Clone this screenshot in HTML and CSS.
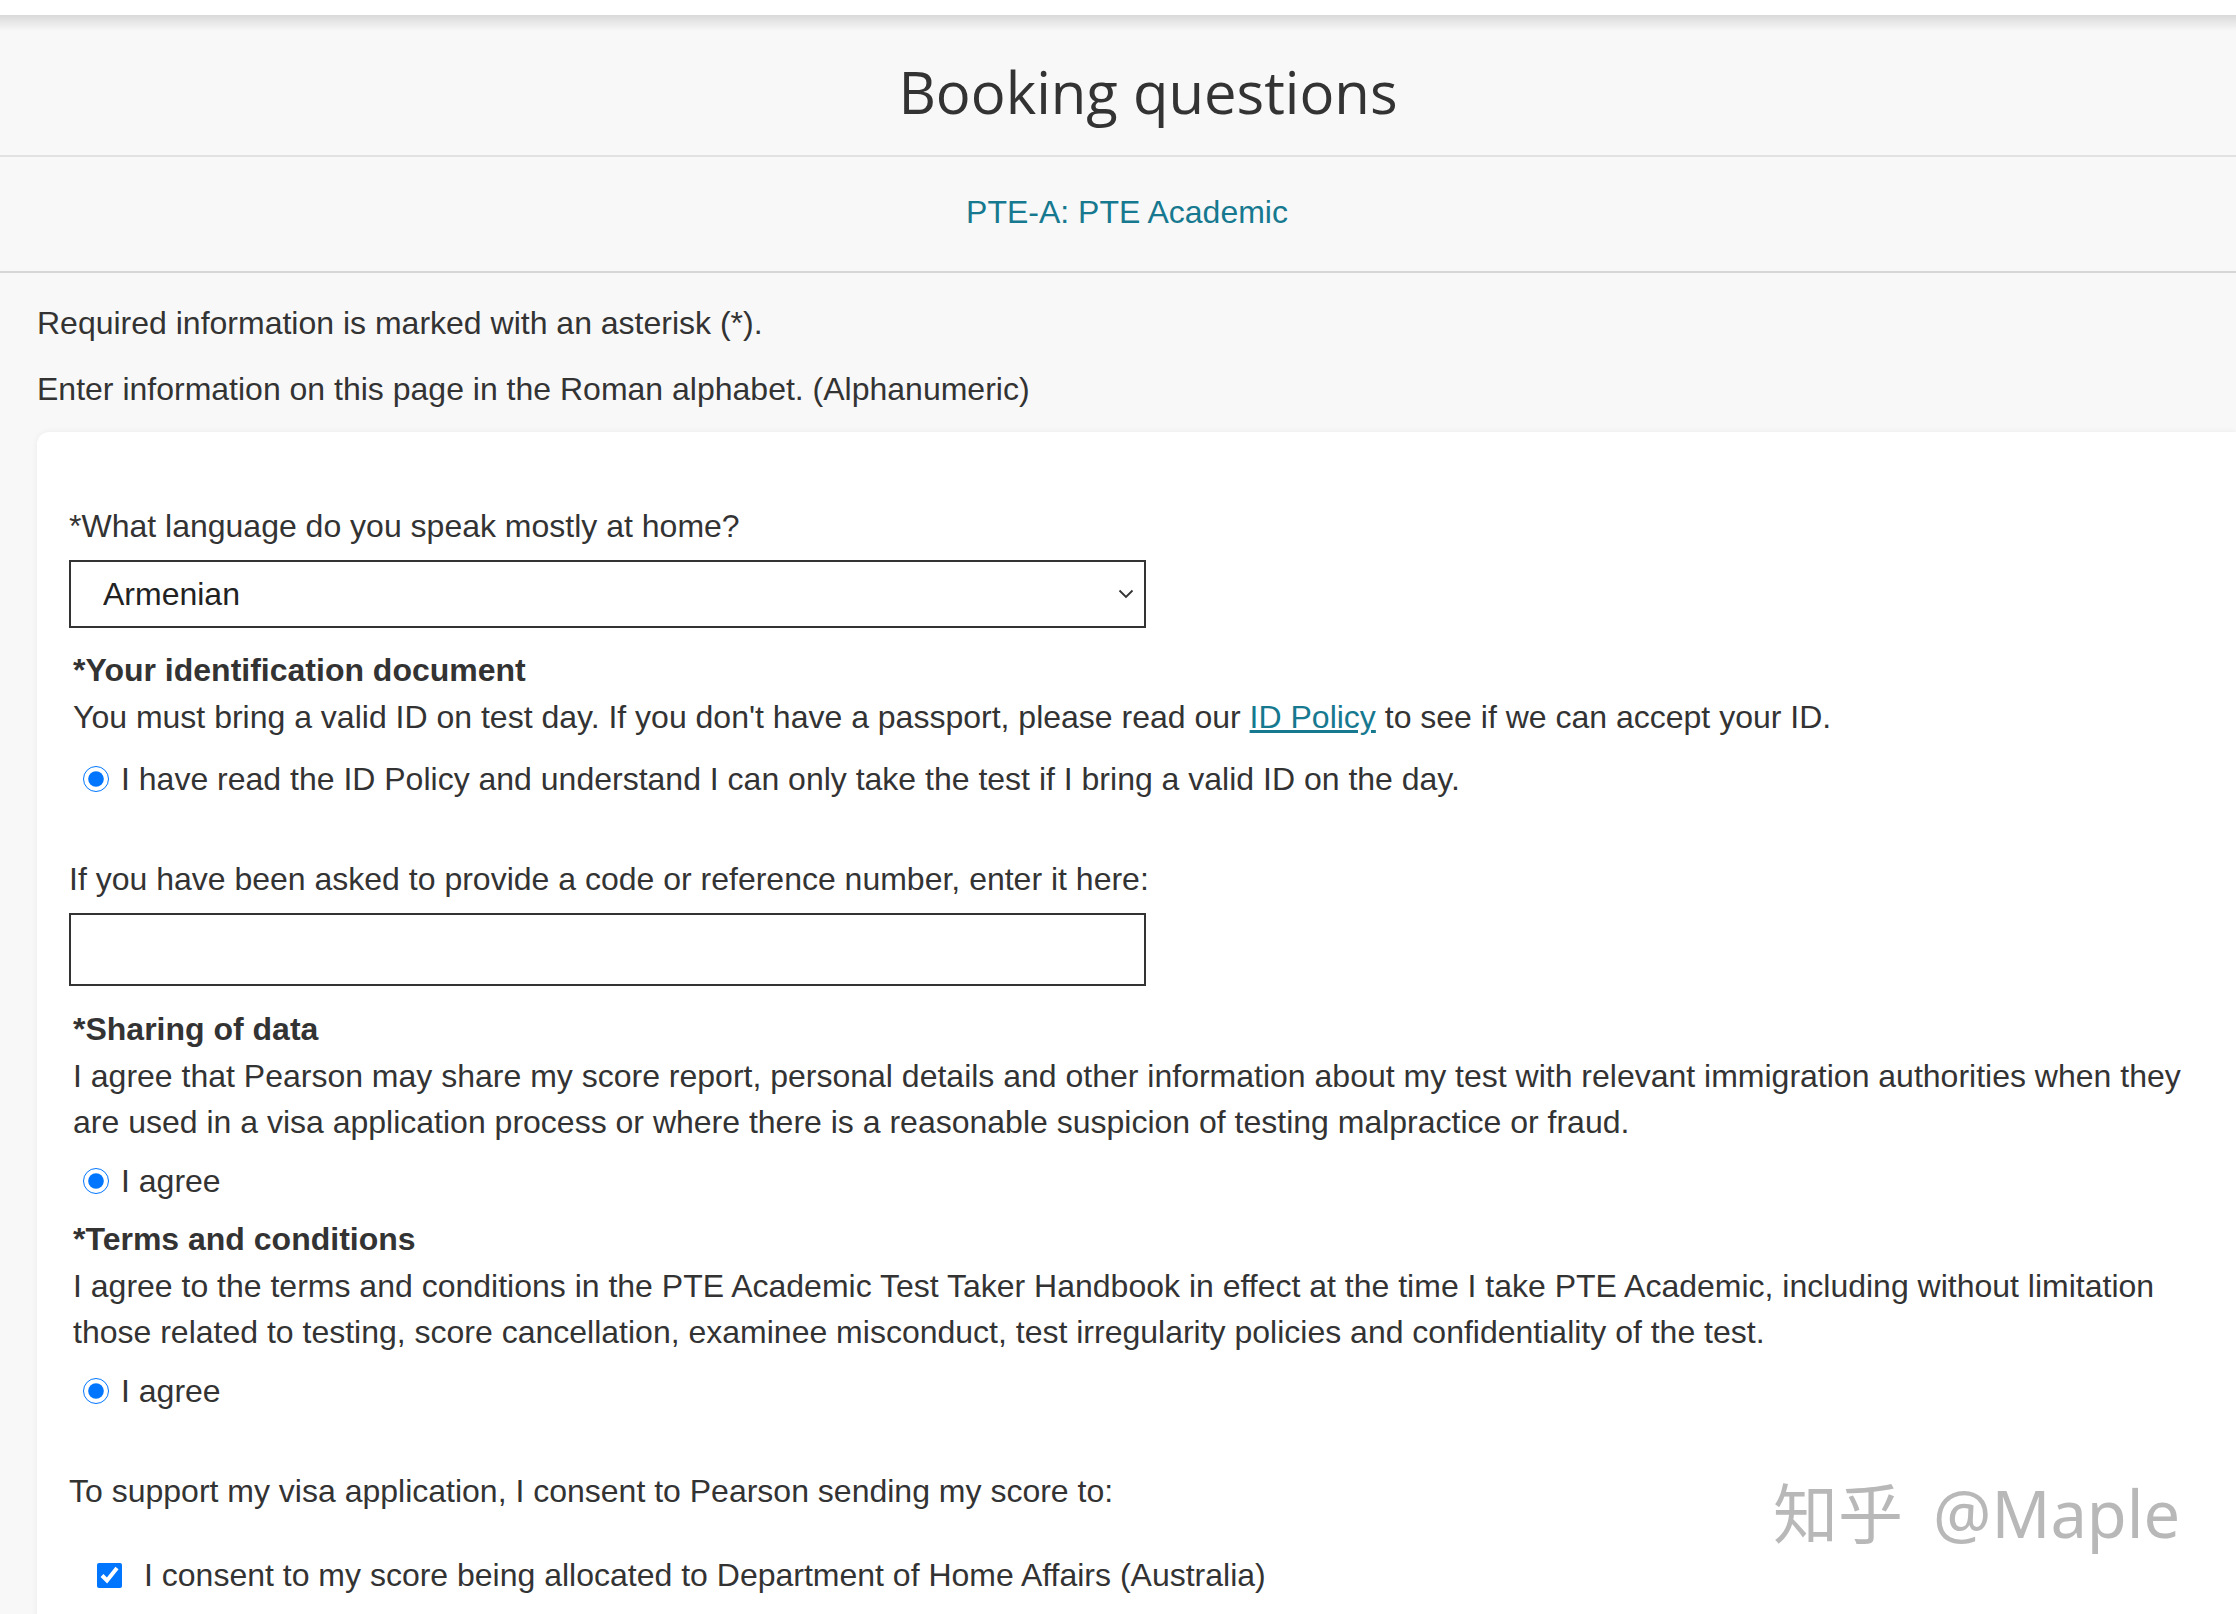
FILE: index.html
```
<!DOCTYPE html>
<html lang="en">
<head>
  <meta charset="UTF-8" />
  <meta name="viewport" content="width=device-width, initial-scale=1.0"/>
  <title>Booking questions</title>
  <link rel="stylesheet" href="styles.css">
</head>
<body>
<div class="top-strip"></div>
<div class="top-shade"></div>
<header class="page-head">
  <div class="title-bar">
    <h1>Booking questions</h1>
  </div>
  <div class="exam-bar">
    <a class="exam-name" href="#">PTE-A: PTE Academic</a>
  </div>
</header>

<main class="page">
  <p class="note">Required information is marked with an asterisk (*).</p>
  <p class="note">Enter information on this page in the Roman alphabet. (Alphanumeric)</p>

  <form class="card">
    <div class="field">
      <label for="language">*What language do you speak mostly at home?</label>
      <div class="select-wrap">
        <select id="language">
          <option>Armenian</option>
        </select>
        <svg class="chevron" width="16" height="10" viewBox="0 0 16 10"><path d="M1.5 1.5 L8 8 L14.5 1.5" fill="none" stroke="#333" stroke-width="1.8"/></svg>
      </div>
    </div>

    <div class="block block-id">
      <h3>*Your identification document</h3>
      <p>You must bring a valid ID on test day. If you don't have a passport, please read our <a href="#">ID Policy</a> to see if we can accept your ID.</p>
      <label class="choice choice-id"><input type="radio" name="id" checked>I have read the ID Policy and understand I can only take the test if I bring a valid ID on the day.</label>
    </div>

    <div class="field field-gap">
      <label for="code">If you have been asked to provide a code or reference number, enter it here:</label>
      <input type="text" id="code" class="text-input">
    </div>

    <div class="block block-share">
      <h3>*Sharing of data</h3>
      <p>I agree that Pearson may share my score report, personal details and other information about my test with relevant immigration authorities when they are used in a visa application process or where there is a reasonable suspicion of testing malpractice or fraud.</p>
      <label class="choice"><input type="radio" name="share" checked>I agree</label>
    </div>

    <div class="block block-terms">
      <h3>*Terms and conditions</h3>
      <p>I agree to the terms and conditions in the PTE Academic Test Taker Handbook in effect at the time I take PTE Academic, including without limitation those related to testing, score cancellation, examinee misconduct, test irregularity policies and confidentiality of the test.</p>
      <label class="choice"><input type="radio" name="terms" checked>I agree</label>
    </div>

    <div class="field field-gap">
      <p class="plain">To support my visa application, I consent to Pearson sending my score to:</p>
      <label class="consent"><input type="checkbox" checked>I consent to my score being allocated to Department of Home Affairs (Australia)</label>
    </div>
  </form>
</main>

<div class="watermark"><span>知乎</span><span class="handle">@Maple</span></div>
</body>
</html>
```

FILE: styles.css
```
html, body {
  margin: 0;
  overflow-x: hidden;
}
body {
  font-family: "Liberation Sans", Arial, sans-serif;
  font-size: 32px;
  line-height: 46px;
  color: #333;
  background-color: #f8f8f8;
}
.top-strip {
  height: 15px;
  background-color: #fff;
}
.top-shade {
  height: 16px;
  background: linear-gradient(#d9d9d9, #f8f8f8);
}
.title-bar {
  padding: 21px 0 23px 60px;
  text-align: center;
  border-bottom: 2px solid #e2e2e2;
}
h1 {
  margin: 0;
  font-family: "Open Sans", "Noto Sans", sans-serif;
  font-weight: 400;
  font-size: 58px;
  line-height: 80px;
  color: #333;
}
.exam-bar {
  padding: 32px 0 36px 18px;
  text-align: center;
  border-bottom: 2px solid #d6d6d6;
}
.exam-name {
  color: #16798f;
  text-decoration: none;
}
.page {
  padding: 27px 0 0 37px;
}
.note {
  margin: 0 0 20px;
}
.card {
  margin-top: 1px;
  background-color: #fff;
  border-radius: 12px 0 0 12px;
  box-shadow: 0 0 6px rgba(0,0,0,0.06);
  padding: 71px 32px 120px 32px;
}
.field label,
.plain {
  display: block;
  margin: 0;
}
.field-gap {
  margin-top: 54px;
}
.select-wrap {
  position: relative;
  width: 1077px;
  margin-top: 11px;
}
select {
  -webkit-appearance: none;
  appearance: none;
  display: block;
  width: 100%;
  height: 68px;
  padding: 0 32px;
  border: 2px solid #333;
  border-radius: 0;
  background-color: #fff;
  font-family: inherit;
  font-size: 32px;
  color: #222;
}
.chevron {
  position: absolute;
  right: 12px;
  top: 29px;
}
.text-input {
  display: block;
  box-sizing: border-box;
  width: 1077px;
  height: 73px;
  margin-top: 11px;
  padding: 0 32px;
  border: 2px solid #333;
  border-radius: 0;
  background-color: #fff;
  font-size: 32px;
}
.block {
  padding-left: 4px;
}
.block-id {
  margin-top: 19px;
}
.block-share {
  margin-top: 20px;
}
.block-terms {
  margin-top: 12px;
}
h3 {
  margin: 0;
  font-size: 32px;
  font-weight: bold;
  line-height: 46px;
}
.block p {
  margin: 1px 0 0;
}
.block a {
  color: #16798f;
}
.choice {
  display: flex;
  align-items: center;
  margin-top: 13px;
}
.choice-id {
  margin-top: 16px;
}
.choice input {
  width: 26px;
  height: 26px;
  margin: 0 12px 0 10px;
}
.consent {
  display: flex !important;
  align-items: center;
  margin-top: 38px !important;
}
.consent input {
  width: 25px;
  height: 25px;
  margin: 0 22px 0 28px;
}
.watermark {
  position: absolute;
  left: 1773px;
  top: 1481px;
  font-family: "Noto Sans", "Noto Sans CJK SC", sans-serif;
  font-size: 65px;
  line-height: 64px;
  color: #b8b8b8;
  white-space: nowrap;
}
.watermark .handle {
  margin-left: 30px;
}
```
